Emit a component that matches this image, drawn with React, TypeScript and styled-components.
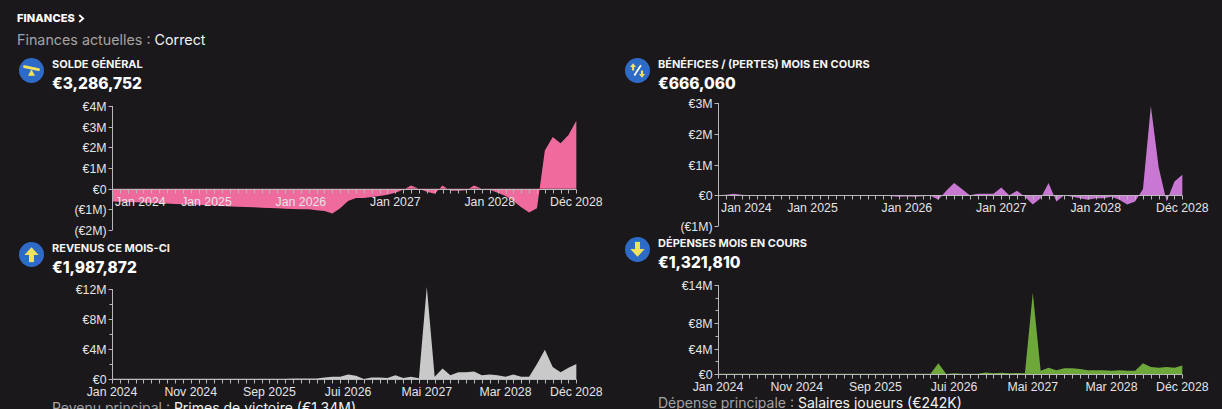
import React from 'react';
import styled, { createGlobalStyle } from 'styled-components';

const GlobalStyle = createGlobalStyle`
  html, body { margin: 0; padding: 0; background: #1a181b; }
  body { font-family: Inter, "Liberation Sans", sans-serif; color: #ffffff; overflow: hidden; }
`;

const PLOT_LEFT = 95;
const STEP = 7.87;
const SVG_W = 606;

const Page = styled.div`
  padding: 10px 17px 0;
`;

const Title = styled.div`
  display: flex;
  align-items: center;
  gap: 3px;
  font: 800 11px/16px Inter, sans-serif;
  letter-spacing: 0.1px;
  color: #ffffff;
`;

const Subtitle = styled.div`
  margin-top: 4px;
  font: 400 14.3px/20px Inter, sans-serif;
  color: #a3a3a5;
  span { color: #f2f2f2; }
`;

const Columns = styled.div`
  display: grid;
  grid-template-columns: 606px 606px;
  margin-top: 7px;
`;

const Column = styled.div`
  display: flex;
  flex-direction: column;
`;

const Card = styled.section<{ $gap?: number }>`
  display: flex;
  flex-direction: column;
  margin-top: ${(p) => p.$gap ?? 0}px;
`;

const Header = styled.div`
  display: flex;
  align-items: flex-start;
  gap: 8px;
  padding-left: 2px;
`;

const IconCircle = styled.div`
  width: 25px;
  height: 25px;
  border-radius: 50%;
  background: #2e6bc7;
  flex: none;
  margin-top: 1px;
  display: flex;
  align-items: center;
  justify-content: center;
`;

const HeaderText = styled.div`
  display: flex;
  flex-direction: column;
`;

const Label = styled.div`
  font: 700 11px/14px Inter, sans-serif;
  text-transform: uppercase;
  color: #f5f5f5;
`;

const Value = styled.div`
  margin-top: 3px;
  font: 800 15.5px/20px Inter, sans-serif;
  color: #ffffff;
`;

const ChartSvg = styled.svg`
  display: block;
  margin-top: 2px;
  overflow: visible;
`;

const AxisText = styled.text`
  font-family: "Liberation Sans", Arial, sans-serif;
  font-size: 12.3px;
  fill: #e4e4e4;
`;

const Footer = styled.div`
  margin-left: 35px;
  font: 400 14px/16px Inter, sans-serif;
  color: #a3a3a5;
  white-space: nowrap;
  span { color: #f2f2f2; }
`;

const YELLOW = '#f3e25b';

const SeesawIcon = () => (
  <svg width="25" height="25" viewBox="2.5 2.5 19 19">
    <line x1="6.6" y1="9" x2="17.4" y2="11.4" stroke={YELLOW} strokeWidth="2.1" strokeLinecap="round" />
    <polygon points="12,11 9.4,16 14.6,16" fill={YELLOW} />
  </svg>
);

const ProfitIcon = () => (
  <svg width="25" height="25" viewBox="2.5 2.5 19 19">
    <line x1="8.6" y1="12" x2="8.6" y2="8.6" stroke={YELLOW} strokeWidth="1.7" />
    <polygon points="6.3,9.4 8.6,6.5 10.9,9.4" fill={YELLOW} />
    <line x1="9.6" y1="15.8" x2="14.6" y2="8" stroke="#ffffff" strokeWidth="1.3" />
    <line x1="15.4" y1="12" x2="15.4" y2="15.4" stroke={YELLOW} strokeWidth="1.7" />
    <polygon points="13.1,14.6 15.4,17.5 17.7,14.6" fill={YELLOW} />
  </svg>
);

const UpIcon = () => (
  <svg width="25" height="25" viewBox="2.5 2.5 19 19">
    <polygon points="6.6,12.4 12,6.4 17.4,12.4" fill={YELLOW} />
    <rect x="10.1" y="11.8" width="3.8" height="6" fill={YELLOW} />
  </svg>
);

const DownIcon = () => (
  <svg width="25" height="25" viewBox="2.5 2.5 19 19">
    <rect x="10.1" y="6.2" width="3.8" height="6" fill={YELLOW} />
    <polygon points="6.6,11.6 12,17.6 17.4,11.6" fill={YELLOW} />
  </svg>
);

type Tick = { v: number; label: string };
type XLabel = { m: number; label: string; start?: boolean };

type ChartProps = {
  data: number[];
  color: string;
  yMin: number;
  yMax: number;
  plotTop: number;
  plotBottom: number;
  height: number;
  yLabels: Tick[];
  minorTicks?: number[];
  xLabels: XLabel[];
  xMode: 'zero' | 'bottom';
};

const AXIS = '#b9b9bb';

function AreaChart({ data, color, yMin, yMax, plotTop, plotBottom, height, yLabels, minorTicks = [], xLabels, xMode }: ChartProps) {
  const y = (v: number) => plotTop + ((yMax - v) / (yMax - yMin)) * (plotBottom - plotTop);
  const x = (i: number) => PLOT_LEFT + i * STEP;
  const zeroY = y(0);
  const last = data.length - 1;
  const pts = data.map((v, i) => `${x(i).toFixed(2)},${y(v).toFixed(2)}`).join(' L ');
  const d = `M ${x(0)},${zeroY} L ${pts} L ${x(last)},${zeroY} Z`;
  const axisY = Math.round(xMode === 'zero' ? zeroY : plotBottom) + 0.5;
  const labelY = axisY + 12;
  const ax = Math.round(PLOT_LEFT) + 0.5;
  return (
    <ChartSvg width={SVG_W} height={height} viewBox={`0 0 ${SVG_W} ${height}`}>
      <path d={d} fill={color} />
      <line x1={ax} y1={plotTop} x2={ax} y2={plotBottom} stroke={AXIS} strokeWidth="1" />
      {yLabels.map((t) => {
        const ty = Math.round(y(t.v)) + 0.5;
        return (
          <g key={t.label}>
            <line x1={ax - 4} x2={ax} y1={ty} y2={ty} stroke={AXIS} strokeWidth="1" />
            <AxisText x={ax - 6} y={ty} textAnchor="end" dominantBaseline="central">
              {t.label}
            </AxisText>
          </g>
        );
      })}
      {minorTicks.map((v) => {
        const ty = Math.round(y(v)) + 0.5;
        return <line key={v} x1={ax - 3} x2={ax} y1={ty} y2={ty} stroke={AXIS} strokeWidth="1" />;
      })}
      <line x1={ax} x2={x(last)} y1={axisY} y2={axisY} stroke={AXIS} strokeWidth="1.2" />
      {data.map((_, i) => {
        const tx = Math.round(x(i)) + 0.5;
        return <line key={i} x1={tx} x2={tx} y1={axisY} y2={axisY + 4} stroke={AXIS} strokeWidth="1" />;
      })}
      {xLabels.map((l) => (
        <AxisText
          key={l.label}
          x={l.start ? PLOT_LEFT + 3 : x(l.m)}
          y={labelY}
          textAnchor={l.start ? 'start' : 'middle'}
          dominantBaseline="central"
        >
          {l.label}
        </AxisText>
      ))}
    </ChartSvg>
  );
}

const soldeData = [
  -0.62, -0.63, -0.64, -0.66, -0.67, -0.69, -0.7, -0.72, -0.74, -0.75, -0.77, -0.78,
  -0.8, -0.82, -0.84, -0.86, -0.87, -0.89, -0.9, -0.92, -0.93, -0.95, -0.97, -0.98,
  -1.0, -1.0, -1.05, -1.08, -1.2, -0.95, -0.6, -0.45, -0.45, -0.4, -0.35, -0.3,
  -0.2, -0.05, 0.15, 0.0, -0.15, -0.25, 0.15, -0.1, -0.1, -0.08, 0.15, 0.0,
  -0.05, -0.2, -0.35, -0.6, -0.9, -1.15, -0.95, 1.85, 2.5, 2.2, 2.6, 3.29,
];

const profitData = [
  0, 0.02, 0.05, 0.02, 0, 0.01, -0.01, 0, 0.01, 0, 0, -0.01,
  0, 0.01, 0, 0, -0.01, 0, 0, 0, 0, 0, -0.03, -0.05,
  -0.04, -0.05, -0.03, -0.02, -0.15, 0.15, 0.4, 0.2, 0.0, 0.05, 0.05, 0.05,
  0.25, 0.0, 0.15, -0.05, -0.3, -0.1, 0.4, -0.2, 0.0, -0.05, -0.1, -0.15,
  -0.1, -0.1, -0.05, -0.15, -0.3, -0.2, 0.2, 2.9, 0.9, -0.2, 0.45, 0.67,
];

const revenueData = [
  0.02, 0.03, 0.02, 0.03, 0.02, 0.03, 0.02, 0.03, 0.02, 0.03, 0.02, 0.03,
  0.02, 0.03, 0.02, 0.03, 0.02, 0.03, 0.02, 0.03, 0.02, 0.03, 0.03, 0.05,
  0.05, 0.06, 0.08, 0.2, 0.3, 0.3, 0.6, 0.45, 0.0, 0.2, 0.2, 0.15,
  0.5, 0.15, 0.3, 0.1, 12.3, 0.3, 1.4, 0.5, 0.9, 0.9, 1.0, 0.5,
  0.6, 0.5, 0.3, 0.6, 0.3, 0.3, 2.0, 3.9, 1.6, 0.9, 1.5, 1.99,
];

const expenseData = [
  0.02, 0.02, 0.02, 0.02, 0.02, 0.02, 0.02, 0.02, 0.02, 0.02, 0.02, 0.02,
  0.02, 0.02, 0.02, 0.02, 0.02, 0.02, 0.02, 0.02, 0.02, 0.02, 0.02, 0.02,
  0.02, 0.02, 0.02, 0.05, 1.7, 0.0, 0.1, 0.05, 0.05, 0.05, 0.25, 0.1,
  0.2, 0.1, 0.15, 0.1, 12.8, 0.5, 1.0, 0.6, 0.9, 0.9, 0.8, 0.6,
  0.6, 0.6, 0.5, 0.6, 0.5, 0.5, 1.7, 1.1, 1.0, 1.1, 1.0, 1.32,
];

const yearLabels: XLabel[] = [
  { m: 0, label: 'Jan 2024', start: true },
  { m: 12, label: 'Jan 2025' },
  { m: 24, label: 'Jan 2026' },
  { m: 36, label: 'Jan 2027' },
  { m: 48, label: 'Jan 2028' },
  { m: 59, label: 'Déc 2028' },
];

const tenMonthLabels: XLabel[] = [
  { m: 0, label: 'Jan 2024' },
  { m: 10, label: 'Nov 2024' },
  { m: 20, label: 'Sep 2025' },
  { m: 30, label: 'Jui 2026' },
  { m: 40, label: 'Mai 2027' },
  { m: 50, label: 'Mar 2028' },
  { m: 59, label: 'Déc 2028' },
];

type StatHeaderProps = { icon: React.ReactNode; label: string; value: string };

const StatHeader = ({ icon, label, value }: StatHeaderProps) => (
  <Header>
    <IconCircle>{icon}</IconCircle>
    <HeaderText>
      <Label>{label}</Label>
      <Value>{value}</Value>
    </HeaderText>
  </Header>
);

export default function App() {
  return (
    <>
      <GlobalStyle />
      <Page>
        <Title>
          FINANCES
          <svg width="7" height="9" viewBox="0 0 7 9">
            <polyline points="1.2,1 5.2,4.5 1.2,8" fill="none" stroke="#ffffff" strokeWidth="1.8" />
          </svg>
        </Title>
        <Subtitle>
          Finances actuelles : <span>Correct</span>
        </Subtitle>
        <Columns>
          <Column>
            <Card>
              <StatHeader icon={<SeesawIcon />} label="Solde général" value="€3,286,752" />
              <AreaChart
                data={soldeData}
                color="#ef6a9d"
                yMin={-2}
                yMax={4}
                plotTop={10}
                plotBottom={134}
                height={142}
                yLabels={[
                  { v: 4, label: '€4M' },
                  { v: 3, label: '€3M' },
                  { v: 2, label: '€2M' },
                  { v: 1, label: '€1M' },
                  { v: 0, label: '€0' },
                  { v: -1, label: '(€1M)' },
                  { v: -2, label: '(€2M)' },
                ]}
                xLabels={yearLabels}
                xMode="zero"
              />
            </Card>
            <Card $gap={3}>
              <StatHeader icon={<UpIcon />} label="Revenus ce mois-ci" value="€1,987,872" />
              <AreaChart
                data={revenueData}
                color="#c9c9c9"
                yMin={0}
                yMax={12}
                plotTop={9}
                plotBottom={99}
                height={120}
                yLabels={[
                  { v: 12, label: '€12M' },
                  { v: 8, label: '€8M' },
                  { v: 4, label: '€4M' },
                  { v: 0, label: '€0' },
                ]}
                minorTicks={[2, 6, 10]}
                xLabels={tenMonthLabels}
                xMode="bottom"
              />
              <Footer>
                Revenu principal : <span>Primes de victoire (€1.34M)</span>
              </Footer>
            </Card>
          </Column>
          <Column>
            <Card>
              <StatHeader icon={<ProfitIcon />} label="Bénéfices / (pertes) mois en cours" value="€666,060" />
              <AreaChart
                data={profitData}
                color="#c877d2"
                yMin={-1}
                yMax={3}
                plotTop={7}
                plotBottom={130}
                height={137}
                yLabels={[
                  { v: 3, label: '€3M' },
                  { v: 2, label: '€2M' },
                  { v: 1, label: '€1M' },
                  { v: 0, label: '€0' },
                  { v: -1, label: '(€1M)' },
                ]}
                xLabels={yearLabels}
                xMode="zero"
              />
            </Card>
            <Card $gap={3}>
              <StatHeader icon={<DownIcon />} label="Dépenses mois en cours" value="€1,321,810" />
              <AreaChart
                data={expenseData}
                color="#6ea83a"
                yMin={0}
                yMax={14}
                plotTop={10}
                plotBottom={99}
                height={120}
                yLabels={[
                  { v: 14, label: '€14M' },
                  { v: 8, label: '€8M' },
                  { v: 4, label: '€4M' },
                  { v: 0, label: '€0' },
                ]}
                minorTicks={[2, 6, 10, 12]}
                xLabels={tenMonthLabels}
                xMode="bottom"
              />
              <Footer>
                Dépense principale : <span>Salaires joueurs (€242K)</span>
              </Footer>
            </Card>
          </Column>
        </Columns>
      </Page>
    </>
  );
}
